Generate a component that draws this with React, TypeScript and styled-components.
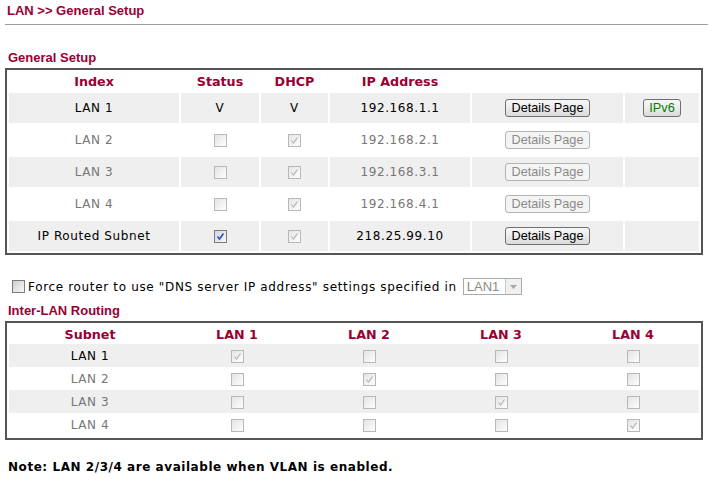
import styled, { createGlobalStyle } from "styled-components"

type Tone = "off" | "on" | "active" | "plain"

interface IRow {
  name: string
  status: "text" | Tone
  dhcp: "text" | Tone
  ip: string
  enabled: boolean
  details: boolean
  ipv6: boolean
}

const rows: IRow[] = [
  { name: "LAN 1", status: "text", dhcp: "text", ip: "192.168.1.1", enabled: true, details: true, ipv6: true },
  { name: "LAN 2", status: "off", dhcp: "on", ip: "192.168.2.1", enabled: false, details: false, ipv6: false },
  { name: "LAN 3", status: "off", dhcp: "on", ip: "192.168.3.1", enabled: false, details: false, ipv6: false },
  { name: "LAN 4", status: "off", dhcp: "on", ip: "192.168.4.1", enabled: false, details: false, ipv6: false },
  { name: "IP Routed Subnet", status: "active", dhcp: "on", ip: "218.25.99.10", enabled: true, details: true, ipv6: false },
]

const lans = ["LAN 1", "LAN 2", "LAN 3", "LAN 4"]

// Styles
const GlobalStyle = createGlobalStyle`
  body {
    margin: 0;
    background: #fff;
    font-family: "DejaVu Sans", Verdana, sans-serif;
    font-size: 12px;
    color: #000;
  }
`
const Page = styled.div`
  width: 715px;
  height: 486px;
  overflow: hidden;
`
const PageTitle = styled.div`
  font-family: "Liberation Sans", Arial, sans-serif;
  font-weight: bold;
  font-size: 13px;
  line-height: 15px;
  color: #990033;
  padding: 3px 0 0 7px;
`
const Rule = styled.div`
  height: 1px;
  background: #a0a0a0;
  margin: 6px 7px 0 5px;
`
const SectionTitle = styled.div<{ $top: number }>`
  font-family: "Liberation Sans", Arial, sans-serif;
  font-weight: bold;
  font-size: 13px;
  line-height: 15px;
  color: #990033;
  padding-left: 8px;
  margin-top: ${p => p.$top}px;
`
const Table = styled.table`
  margin: 3px 0 0 5px;
  width: 698px;
  border: 2px solid #555;
  border-collapse: separate;
  border-spacing: 2px;
  table-layout: fixed;
  font-size: 12px;
`
const Head = styled.th`
  height: 19px;
  padding: 0;
  font-weight: bold;
  font-size: 12.7px;
  color: #990033;
  text-align: center;
`
const Cell = styled.td<{ $shade: boolean; $dim?: boolean }>`
  height: 30px;
  padding: 0;
  text-align: center;
  letter-spacing: 0.6px;
  background: ${p => (p.$shade ? "#efefef" : "#fff")};
  color: ${p => (p.$dim ? "#777" : "#000")};
`
const RouteTable = styled.table`
  margin: 3px 0 0 5px;
  width: 698px;
  border: 2px solid #555;
  border-collapse: separate;
  border-spacing: 0;
  padding: 2px;
  table-layout: fixed;
  font-size: 12px;
`
const RouteRow = styled.tr<{ $shade: boolean }>`
  background: ${p => (p.$shade ? "#efefef" : "#fff")};
`
const RouteCell = styled.td<{ $dim?: boolean }>`
  height: 23px;
  padding: 0;
  text-align: center;
  letter-spacing: 0.6px;
  color: ${p => (p.$dim ? "#777" : "#000")};
`
const Btn = styled.button<{ $green?: boolean }>`
  height: 18px;
  padding: 0 ${p => (p.$green ? 5 : 6)}px;
  border: 1px solid #707070;
  border-radius: 3px;
  background: linear-gradient(#f7f7f7, #ececec 50%, #dadada);
  font-family: "Liberation Sans", Arial, sans-serif;
  font-size: 12.7px;
  line-height: 16px;
  letter-spacing: 0;
  color: ${p => (p.$green ? "#008000" : "#000")};
  vertical-align: middle;
  &:disabled {
    border-color: #b0b4b7;
    background: #f4f4f4;
    color: #8a8a8a;
  }
`
const ForceRow = styled.div`
  display: flex;
  align-items: center;
  height: 17px;
  margin-top: 23px;
  padding-left: 12px;
  white-space: nowrap;
`
const ForceText = styled.span`
  margin: 0 6px 0 3px;
  letter-spacing: 0.66px;
`
const Select = styled.div`
  display: flex;
  box-sizing: border-box;
  width: 59px;
  height: 17px;
  border: 1px solid #a5acb2;
  font-family: "Liberation Sans", Arial, sans-serif;
  font-size: 13px;
  color: #8a8a8a;
`
const SelectValue = styled.span`
  flex: 1;
  padding-left: 3px;
  line-height: 15px;
`
const SelectArrow = styled.span`
  width: 15px;
  border-left: 1px solid #c8c8c8;
  background: #f0f0f0;
  display: flex;
  align-items: center;
  justify-content: center;
`
const Note = styled.div`
  font-weight: bold;
  font-size: 12px;
  line-height: 15px;
  letter-spacing: 0.55px;
  padding-left: 8px;
  margin-top: 20px;
`
const Box = styled.span<{ $tone: Tone }>`
  display: inline-flex;
  align-items: center;
  justify-content: center;
  box-sizing: border-box;
  width: 13px;
  height: 13px;
  vertical-align: middle;
  border: 1px solid ${p => (p.$tone === "active" || p.$tone === "plain" ? "#7b7b7b" : "#b8b8b8")};
  background: ${p =>
    p.$tone === "plain"
      ? "linear-gradient(135deg, #cfcfcf, #ececec 70%, #f8f8f8)"
      : p.$tone === "active"
      ? "linear-gradient(135deg, #d0d6e4, #eceff5 70%, #fafafa)"
      : "linear-gradient(135deg, #e4e4e4, #f6f6f6 70%, #fff)"};
`

const Check: React.FC<{ tone: Tone }> = ({ tone }) => (
  <Box $tone={tone}>
    {(tone === "on" || tone === "active") && (
      <svg width="9" height="9" viewBox="0 0 9 9">
        <path
          d="M1.5 4.5 L3.5 7 L7.5 1.5"
          fill="none"
          stroke={tone === "active" ? "#3a55b0" : "#b4b4b4"}
          strokeWidth={tone === "active" ? 1.7 : 1.2}
        />
      </svg>
    )}
  </Box>
)

const App: React.FC = () => {
  return (
    <Page>
      <GlobalStyle />
      <PageTitle>LAN &gt;&gt; General Setup</PageTitle>
      <Rule />
      <SectionTitle $top={25}>General Setup</SectionTitle>
      <Table>
        <colgroup>
          <col style={{ width: 170 }} />
          <col style={{ width: 78 }} />
          <col style={{ width: 67 }} />
          <col style={{ width: 140 }} />
          <col style={{ width: 151 }} />
          <col />
        </colgroup>
        <thead>
          <tr>
            <Head>Index</Head>
            <Head>Status</Head>
            <Head>DHCP</Head>
            <Head>IP Address</Head>
            <Head />
            <Head />
          </tr>
        </thead>
        <tbody>
          {rows.map((r, i) => {
            const shade = i % 2 === 0
            return (
              <tr key={r.name}>
                <Cell $shade={shade} $dim={!r.enabled}>{r.name}</Cell>
                <Cell $shade={shade}>{r.status === "text" ? "V" : <Check tone={r.status} />}</Cell>
                <Cell $shade={shade}>{r.dhcp === "text" ? "V" : <Check tone={r.dhcp} />}</Cell>
                <Cell $shade={shade} $dim={!r.enabled}>{r.ip}</Cell>
                <Cell $shade={shade}>
                  <Btn disabled={!r.details}>Details Page</Btn>
                </Cell>
                <Cell $shade={shade}>{r.ipv6 && <Btn $green>IPv6</Btn>}</Cell>
              </tr>
            )
          })}
        </tbody>
      </Table>
      <ForceRow>
        <Check tone="plain" />
        <ForceText>Force router to use "DNS server IP address" settings specified in</ForceText>
        <Select>
          <SelectValue>LAN1</SelectValue>
          <SelectArrow>
            <svg width="7" height="4" viewBox="0 0 7 4">
              <path d="M0 0 H7 L3.5 4 Z" fill="#a8a8a8" />
            </svg>
          </SelectArrow>
        </Select>
      </ForceRow>
      <SectionTitle $top={8}>Inter-LAN Routing</SectionTitle>
      <RouteTable>
        <colgroup>
          <col style={{ width: 162 }} />
          <col />
          <col />
          <col />
          <col />
        </colgroup>
        <thead>
          <tr>
            <Head>Subnet</Head>
            {lans.map(l => (
              <Head key={l}>{l}</Head>
            ))}
          </tr>
        </thead>
        <tbody>
          {lans.map((l, i) => (
            <RouteRow key={l} $shade={i % 2 === 0}>
              <RouteCell $dim={i > 0}>{l}</RouteCell>
              {lans.map((c, j) => (
                <RouteCell key={c}>
                  <Check tone={i === j ? "on" : "off"} />
                </RouteCell>
              ))}
            </RouteRow>
          ))}
        </tbody>
      </RouteTable>
      <Note>Note: LAN 2/3/4 are available when VLAN is enabled.</Note>
    </Page>
  )
}

export default App
